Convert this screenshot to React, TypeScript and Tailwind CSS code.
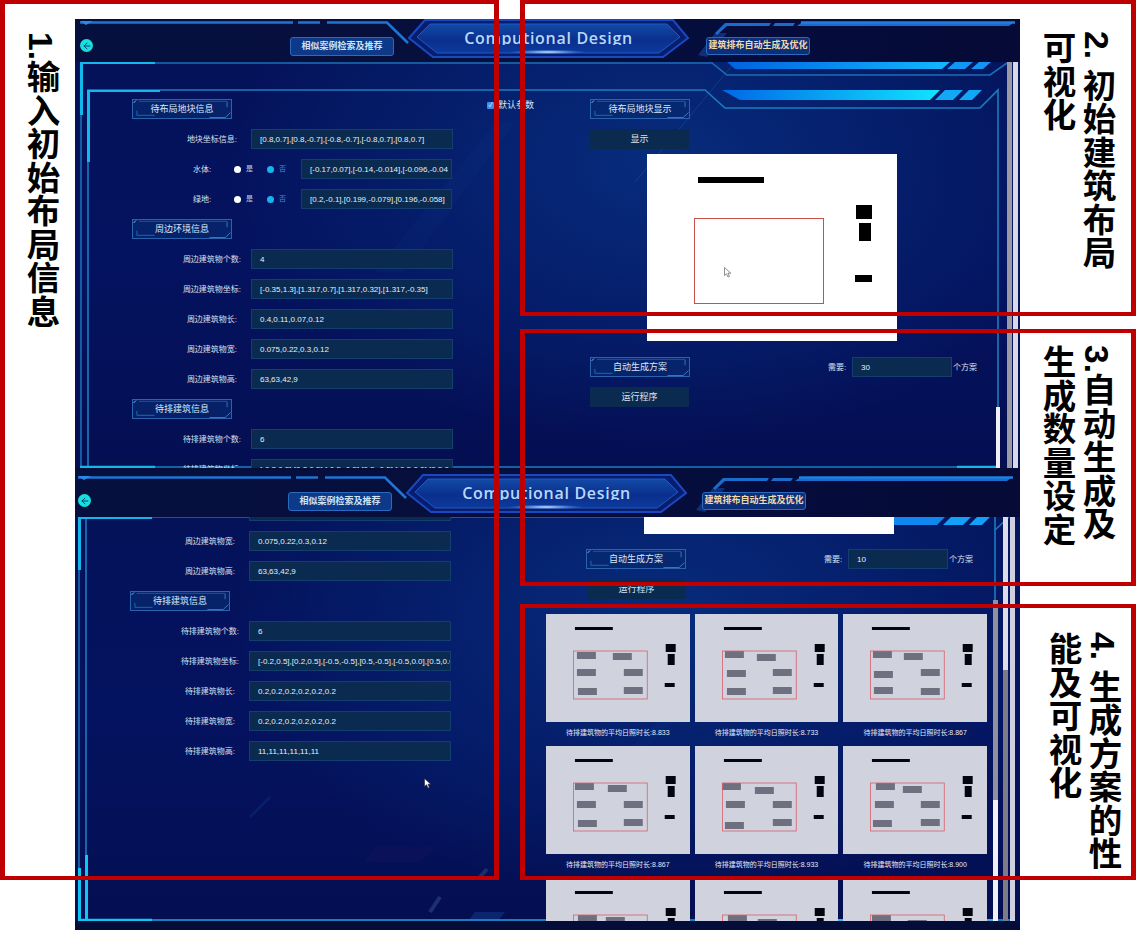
import React from "react";
import { ArrowLeft } from "lucide-react";

const titleFont = "[font-family:'Open_Sans','Noto_Sans',sans-serif]";

function Decor() {
  return (
    <svg className="absolute inset-0 pointer-events-none" width="8" height="8" viewBox="0 0 8 8">
      <path d="M0.5 3 L3 0.5" stroke="#7fb4e8" strokeWidth="1" fill="none" />
    </svg>
  );
}

function SectionTitle({ children }: { children: React.ReactNode }) {
  return (
    <div className="relative flex h-[20px] w-[100px] shrink-0 items-center justify-center border border-[#2c62ad] bg-[#07296f]/70 pt-[2px] text-[9px] text-[#dce8f8]">
      <Decor />
      <svg className="absolute inset-0 pointer-events-none" width="100%" height="100%" viewBox="0 0 100 20" preserveAspectRatio="none">
        <path d="M4 12 V17 H22" stroke="#2f79c8" strokeWidth="0.8" fill="none" />
        <path d="M96 2 V8" stroke="#3f8fd8" strokeWidth="0.8" fill="none" />
        <path d="M6 1.5 H96" stroke="#2f79c8" strokeWidth="0.6" fill="none" />
        <path d="M99.5 14 L94 19.5 H78" stroke="#5a8fd0" strokeWidth="0.8" fill="none" />
      </svg>
      <span className="relative">{children}</span>
    </div>
  );
}

function Field({ children, className }: { children: React.ReactNode; className: string }) {
  return (
    <div
      className={
        "h-[20px] shrink-0 overflow-hidden whitespace-nowrap border border-[#123f6f] bg-[#0a2a50] pl-[8px] pr-[4px] text-[8px] leading-[20px] text-[#e8f0f8] " +
        className
      }
    >
      {children}
    </div>
  );
}

function Row({ label, value }: { label: string; value: string }) {
  return (
    <div className="flex h-[20px] shrink-0 items-center pl-[107px]">
      <div className="w-[60px] pt-[2px] text-center text-[8px] whitespace-nowrap text-[#d6e0ee]">{label}</div>
      <Field className="ml-[9px] w-[202px]">{value}</Field>
    </div>
  );
}

function RadioRow({ label, value }: { label: string; value: string }) {
  return (
    <div className="flex h-[20px] shrink-0 items-center pl-[118px]">
      <span className="w-[21px] pt-[2px] text-[8px] text-[#d6e0ee]">{label}</span>
      <span className="ml-[20px] h-[7px] w-[7px] rounded-full bg-white" />
      <span className="ml-[5px] w-[7px] text-[7px] text-[#c8d4e8]">是</span>
      <span className="ml-[14px] h-[7px] w-[7px] rounded-full bg-[#17b4f0]" />
      <span className="ml-[5px] w-[7px] text-[7px] text-[#3f8de0]">否</span>
      <Field className="ml-[15px] w-[151px]">{value}</Field>
    </div>
  );
}

function TopFrame() {
  return (
    <svg className="absolute left-0 top-0 pointer-events-none" width="945" height="406" viewBox="0 0 945 406">
      <defs>
        <linearGradient id="barA" x1="0" x2="1" y1="0" y2="0">
          <stop offset="0" stopColor="#0062e0" />
          <stop offset="1" stopColor="#12b8ff" />
        </linearGradient>
        <linearGradient id="barB" x1="0" x2="1" y1="0" y2="0">
          <stop offset="0" stopColor="#0068e8" />
          <stop offset="1" stopColor="#10e4ff" />
        </linearGradient>
      </defs>
      <path d="M300 210 L420 60 L440 60 L330 210 Z" fill="#1a4aa0" opacity="0.08" />
      <path d="M660 0 L560 120" stroke="#2a62b0" strokeWidth="1" opacity="0.35" />
      <path d="M6 406 V1 H637 L652 13 H915 L932 1" stroke="#1b6fb4" strokeWidth="1.6" fill="none" />
      <path d="M13 406 V28 H630 L650 46 H905 L923 28 V406" stroke="#1b7cc0" strokeWidth="1.6" fill="none" />
      <path d="M5 405 H925" stroke="#1b7cc0" strokeWidth="1.6" />
      <path d="M6.5 0 V53" stroke="#12b8ea" strokeWidth="3" />
      <path d="M5 1 H80" stroke="#12b8ea" strokeWidth="2" />
      <path d="M13.5 28 V100" stroke="#12b8ea" strokeWidth="3" />
      <path d="M12 29 H85" stroke="#12b8ea" strokeWidth="2" />
      <path d="M5 405 H80 M882 405 H925" stroke="#16b4ea" strokeWidth="2.4" />
      <polygon points="652,0 875,0 867,7 660,7" fill="url(#barA)" />
      <polygon points="880,0 898,0 890,7 872,7" fill="#1296f4" />
      <polygon points="904,0 916,0 908,7 896,7" fill="#1296f4" />
      <polygon points="647,28 865,28 855,38 665,38" fill="url(#barB)" />
      <polygon points="870,28 888,28 878,38 860,38" fill="#12a8f8" />
      <polygon points="894,28 907,28 897,38 884,38" fill="#12a8f8" />
    </svg>
  );
}

function BottomFrame() {
  return (
    <svg className="absolute left-0 top-0 pointer-events-none" width="945" height="404" viewBox="0 0 945 404">
      <path d="M480 300 L600 190 L612 190 L500 300 Z" fill="#1a4aa0" opacity="0.08" />
      <path d="M300 330 H360 L345 345 H290 Z" fill="#3a1a60" opacity="0.14" />
      <path d="M195 280 L175 300" stroke="#1a4aa8" strokeWidth="3" opacity="0.22" />
      <path d="M355 395 L365 380" stroke="#5a7ab0" strokeWidth="4" opacity="0.3" />
      <path d="M405 360 L412 352" stroke="#5a7ab0" strokeWidth="4" opacity="0.28" />
      <path d="M400 395 H430 L424 403 H394 Z" fill="#1a4ea8" opacity="0.35" />
      <path d="M4 404 V0 H620" stroke="#1b6fb4" strokeWidth="1.6" fill="none" />
      <path d="M11 404 V0" stroke="#1b7cc0" strokeWidth="1.6" fill="none" />
      <path d="M920 0 V404" stroke="#1b7cc0" strokeWidth="1.6" fill="none" />
      <path d="M4 403 H940" stroke="#1b7cc0" strokeWidth="1.8" />
      <path d="M4.5 0 V53" stroke="#12b8ea" strokeWidth="3" />
      <path d="M3 1 H77" stroke="#12b8ea" strokeWidth="2" />
      <path d="M4.5 351 V404" stroke="#12c4f2" strokeWidth="3" />
      <path d="M11.5 338 V404" stroke="#12c4f2" strokeWidth="3" />
      <path d="M3 403 H77" stroke="#12c4f2" strokeWidth="2.4" />
      <path d="M700 403 H922" stroke="#4fb8f0" strokeWidth="2" opacity="0.8" />
      <polygon points="818,0 870,0 862,8 818,8" fill="#0f86f0" />
      <polygon points="876,0 896,0 888,8 868,8" fill="#12a0f8" />
      <polygon points="902,0 915,0 907,8 894,8" fill="#12a0f8" />
      <path d="M920 13 L934 0" stroke="#1b7cc0" strokeWidth="1.4" />
    </svg>
  );
}

function Header({ bottom }: { bottom?: boolean }) {
  return (
    <div className={"relative shrink-0 bg-[linear-gradient(90deg,#05103f,#070f3c_40%,#050d3d_70%,#050a36)] " + (bottom ? "h-[47px] pt-[4px]" : "h-[43px]")}>
      <div className={"relative h-[43px] w-[945px] " + (bottom ? "-ml-[2px]" : "")}>
        <svg className="absolute left-0 top-0" width="945" height="43" viewBox="0 0 945 43">
          <defs>
            <linearGradient id={bottom ? "plateB" : "plateA"} x1="0" x2="0" y1="0" y2="1">
              <stop offset="0" stopColor="#134aa6" />
              <stop offset="0.55" stopColor="#0a2f8e" />
              <stop offset="1" stopColor="#0d3a9c" />
            </linearGradient>
            <radialGradient id={bottom ? "glowB" : "glowA"}>
              <stop offset="0" stopColor="#dff2ff" />
              <stop offset="1" stopColor="#4aa0ff" stopOpacity="0" />
            </radialGradient>
          </defs>
          <path d="M5 3.5 H218 M223 3.5 H245 M252 3.5 H312 L333 24" stroke="#1f74d4" strokeWidth="2.6" fill="none" />
          <polygon points="5,2 18,2 11,6" fill="#2a8ae8" />
          <path d="M623 36 L640 14 L652 14 L632 38 Z" fill="#1a4aa8" opacity="0.55" />
          <path d="M640 14 L650 4 H696 L694 7 H652 L642 16 M700 4 H720 L718 7 H698 M726 4 H938 L934 7 H722" stroke="none" fill="#1b6bcc" />
          <path d="M726 3.5 H940" stroke="#1f7ee0" strokeWidth="2.6" />
          <polygon points="334,19 350,1 598,1 613,19 588,38 358,38" fill="#081d6e" stroke="#1a48c0" strokeWidth="2" />
          <polygon points="342,18 355,5 592,5 605,18 584,34 362,34" fill={"url(#" + (bottom ? "plateB" : "plateA") + ")"} stroke="#1d5ac4" strokeWidth="1" />
          <ellipse cx="473" cy="33" rx="38" ry="2.4" fill={"url(#" + (bottom ? "glowB" : "glowA") + ")"} />
        </svg>
        <div className="relative flex items-start pl-[5px]">
          <div className="mt-[20px] flex h-[13px] w-[13px] shrink-0 items-center justify-center rounded-full bg-[#16e0de] text-[#0a3a78]">
            <ArrowLeft size={10} strokeWidth={2.4} />
          </div>
          <div className="ml-[197px] mt-[18px] flex h-[19px] w-[104px] shrink-0 items-center justify-center rounded-[3px] border border-[#2a6bc0] bg-[#0c3a88] text-[9px] font-bold text-[#cfe2f6]">
            相似案例检索及推荐
          </div>
          <div className={"ml-[70px] mt-[8px] h-[18px] w-[169px] shrink-0 overflow-hidden whitespace-nowrap text-center text-[16px] font-semibold leading-[22px] tracking-[0.7px] text-[#b8d8fb] " + titleFont}>
            Computional Design
          </div>
          <div className={"mt-[18px] flex h-[18px] w-[104px] shrink-0 items-center justify-center rounded-[3px] border border-[#2a6bc0] bg-[#0c2f78] text-[9px] font-bold whitespace-nowrap text-[#f2d9a8] " + (bottom ? "ml-[71px]" : "ml-[73px]")}>
            建筑排布自动生成及优化
          </div>
        </div>
      </div>
    </div>
  );
}

type B = [number, number];

function Card({ blocks, caption }: { blocks: B[]; caption: string }) {
  return (
    <div className="flex flex-col items-center">
      <svg className="block h-[108px] w-full bg-[#d0d2de]" viewBox="0 0 144 108" preserveAspectRatio="none">
        <rect x="29" y="13" width="38" height="3" fill="#05050f" />
        <rect x="120" y="30" width="10" height="8" fill="#05050f" />
        <rect x="122" y="40" width="7" height="11" fill="#05050f" />
        <rect x="119" y="69" width="10" height="4" fill="#05050f" />
        {blocks.map(([x, y], i) => (
          <rect key={i} x={x} y={y} width="19" height="7" fill="#6e7080" />
        ))}
        <rect x="27.5" y="37" width="74" height="48" fill="none" stroke="#d8606c" strokeWidth="0.8" />
      </svg>
      <div className="h-[24px] whitespace-nowrap text-[7px] leading-[22px] text-[#e4e8f2]">{caption}</div>
    </div>
  );
}

const cards: { blocks: B[]; caption: string }[] = [
  { blocks: [[31, 38], [67, 39], [31, 55], [78, 55], [32, 74], [78, 73]], caption: "待排建筑物的平均日照时长:8.833" },
  { blocks: [[30, 37], [62, 40], [32, 56], [78, 55], [32, 74], [78, 73]], caption: "待排建筑物的平均日照时长:8.733" },
  { blocks: [[30, 37], [61, 39], [31, 57], [78, 55], [31, 73], [78, 74]], caption: "待排建筑物的平均日照时长:8.867" },
  { blocks: [[29, 37], [62, 39], [31, 55], [78, 55], [32, 74], [78, 73]], caption: "待排建筑物的平均日照时长:8.867" },
  { blocks: [[27, 37], [60, 41], [31, 55], [78, 55], [30, 76], [78, 73]], caption: "待排建筑物的平均日照时长:8.933" },
  { blocks: [[33, 37], [60, 40], [32, 55], [78, 55], [30, 74], [78, 73]], caption: "待排建筑物的平均日照时长:8.900" },
  { blocks: [[32, 37], [60, 39], [31, 55], [78, 55], [32, 74], [78, 73]], caption: "待排建筑物的平均日照时长:8.800" },
  { blocks: [[33, 37], [63, 41], [31, 55], [78, 55], [32, 74], [78, 73]], caption: "待排建筑物的平均日照时长:8.800" },
  { blocks: [[29, 37], [65, 42], [31, 55], [78, 55], [32, 74], [78, 73]], caption: "待排建筑物的平均日照时长:8.800" },
];

function Cursor({ color, stroke, className }: { color: string; stroke: string; className: string }) {
  return (
    <svg className={"absolute " + className} width="8" height="11" viewBox="0 0 8 11">
      <path d="M0.5 0.5 V8.5 L2.5 6.7 L4 10 L5.4 9.4 L4 6.2 H6.8 Z" fill={color} stroke={stroke} strokeWidth="0.6" />
    </svg>
  );
}

function Plan() {
  return (
    <div className="relative ml-[57px] mt-[5px] h-[187px] w-[250px] shrink-0 bg-white">
      <svg className="block" width="250" height="187" viewBox="0 0 250 187">
        <rect x="51" y="23" width="66" height="6" fill="#000" />
        <rect x="47.5" y="64.5" width="129" height="85" fill="none" stroke="#c8504a" strokeWidth="1" />
        <rect x="209" y="51" width="16" height="14" fill="#000" />
        <rect x="212" y="69" width="12" height="18" fill="#000" />
        <rect x="208" y="121" width="17" height="7" fill="#000" />
      </svg>
      <Cursor color="#ffffff" stroke="#444" className="left-[77px] top-[113px]" />
    </div>
  );
}

function GenerateRow({ value }: { value: string }) {
  return (
    <div className="flex h-[20px] shrink-0 items-center">
      <SectionTitle>自动生成方案</SectionTitle>
      <span className="ml-[138px] w-[24px] pt-[2px] text-[8px] whitespace-nowrap text-[#dce4f0]">需要:</span>
      <Field className="w-[100px]">{value}</Field>
      <span className="ml-[1px] pt-[2px] text-[8px] whitespace-nowrap text-[#dce4f0]">个方案</span>
    </div>
  );
}

function RunButton({ label }: { label: string }) {
  return (
    <div className="flex h-[20px] w-[99px] shrink-0 items-center justify-center bg-[#0a2a50] pt-[2px] text-[9px] text-[#dce4f0]">{label}</div>
  );
}

const bgMain =
  "bg-[radial-gradient(ellipse_430px_280px_at_62%_25%,#072c7c_0%,#051f6c_50%,transparent_100%),linear-gradient(180deg,#04125a,#041360_50%,#040f52)]";

function TopScreen() {
  return (
    <div className="flex h-[451px] w-[945px] shrink-0 flex-col">
      <Header />
      <div className={"relative h-[406px] shrink-0 overflow-hidden " + bgMain}>
        <TopFrame />
        <div className="relative flex h-full">
          <div className="flex w-[515px] shrink-0 flex-col gap-[10px] pt-[37px]">
            <div className="flex items-start justify-between pl-[57px] pr-[56px]">
              <SectionTitle>待布局地块信息</SectionTitle>
              <div className="flex items-center gap-[4px] text-[9px] leading-[12px] text-[#dce4f0]">
                <span className="flex h-[7px] w-[7px] items-center justify-center rounded-[1px] bg-[#3b8df0] text-[6px] leading-none text-white">✓</span>
                默认参数
              </div>
            </div>
            <Row label="地块坐标信息:" value="[0.8,0.7],[0.8,-0.7],[-0.8,-0.7],[-0.8,0.7],[0.8,0.7]" />
            <RadioRow label="水体:" value="[-0.17,0.07],[-0.14,-0.014],[-0.096,-0.04" />
            <RadioRow label="绿地:" value="[0.2,-0.1],[0.199,-0.079],[0.196,-0.058]" />
            <div className="pl-[57px]"><SectionTitle>周边环境信息</SectionTitle></div>
            <Row label="周边建筑物个数:" value="4" />
            <Row label="周边建筑物坐标:" value="[-0.35,1.3],[1.317,0.7],[1.317,0.32],[1.317,-0.35]" />
            <Row label="周边建筑物长:" value="0.4,0.11,0.07,0.12" />
            <Row label="周边建筑物宽:" value="0.075,0.22,0.3,0.12" />
            <Row label="周边建筑物高:" value="63,63,42,9" />
            <div className="pl-[57px]"><SectionTitle>待排建筑信息</SectionTitle></div>
            <Row label="待排建筑物个数:" value="6" />
            <Row label="待排建筑物坐标:" value="[-0.2,0.5],[0.2,0.5],[-0.5,-0.5],[0.5,-0.5],[-0.5,0.0],[0.5,0.0]" />
          </div>
          <div className="flex flex-col pt-[37px]">
            <SectionTitle>待布局地块显示</SectionTitle>
            <div className="mt-[10px]"><RunButton label="显示" /></div>
            <Plan />
            <div className="mt-[16px]"><GenerateRow value="30" /></div>
            <div className="mt-[10px]"><RunButton label="运行程序" /></div>
          </div>
        </div>
        <div className="absolute left-[921px] top-[345px] h-[61px] w-[4px] bg-[#f0f0f6]" />
        <div className="absolute left-[932px] top-0 h-full w-[5px] bg-[#9a9aa6]" />
        <div className="absolute left-[938px] top-0 h-full w-[5px] bg-[#d8d8e6]" />
      </div>
      <div className="h-[2px] shrink-0 bg-[#040c3a]" />
    </div>
  );
}

function BottomScreen() {
  return (
    <div className="flex h-[460px] w-[945px] shrink-0 flex-col">
      <Header bottom />
      <div className={"relative h-[404px] shrink-0 overflow-hidden " + bgMain}>
        <BottomFrame />
        <div className="relative flex h-full">
          <div className="-mt-[16px] -ml-[2px] flex w-[513px] shrink-0 flex-col gap-[10px]">
            <Row label="周边建筑物长:" value="0.4,0.11,0.07,0.12" />
            <Row label="周边建筑物宽:" value="0.075,0.22,0.3,0.12" />
            <Row label="周边建筑物高:" value="63,63,42,9" />
            <div className="pl-[57px]"><SectionTitle>待排建筑信息</SectionTitle></div>
            <Row label="待排建筑物个数:" value="6" />
            <Row label="待排建筑物坐标:" value="[-0.2,0.5],[0.2,0.5],[-0.5,-0.5],[0.5,-0.5],[-0.5,0.0],[0.5,0.0]" />
            <Row label="待排建筑物长:" value="0.2,0.2,0.2,0.2,0.2,0.2" />
            <Row label="待排建筑物宽:" value="0.2,0.2,0.2,0.2,0.2,0.2" />
            <Row label="待排建筑物高:" value="11,11,11,11,11,11" />
          </div>
          <div className="flex flex-col">
            <div className="ml-[58px] h-[17px] w-[250px] shrink-0 bg-white" />
            <div className="mt-[15px]"><GenerateRow value="10" /></div>
            <div className="ml-[1px] mt-[10px]"><RunButton label="运行程序" /></div>
            <div className="-ml-[40px] mt-[15px] grid w-[441px] shrink-0 grid-cols-3 gap-x-[5px]">
              {cards.map((c, i) => (
                <Card key={i} blocks={c.blocks} caption={c.caption} />
              ))}
            </div>
          </div>
        </div>
        <Cursor color="#ffffff" stroke="#223" className="left-[349px] top-[261px]" />
        <div className="absolute left-[918px] top-[83px] h-[200px] w-[5px] bg-[#8f929e]" />
        <div className="absolute left-[918px] top-[283px] h-[121px] w-[5px] bg-[#f0f0f6]" />
        <div className="absolute left-[928px] top-0 h-[153px] w-[5px] bg-[#dcdcea]" />
        <div className="absolute left-[928px] top-[153px] h-[251px] w-[5px] bg-[#7c7c88]" />
        <div className="absolute left-[935px] top-0 h-full w-[5px] bg-[#cfcfdf]" />
      </div>
      <div className="h-[9px] shrink-0 bg-[#040c3a]" />
    </div>
  );
}

const labelCls =
  "[writing-mode:vertical-rl] text-[33.5px] font-bold leading-[40px] text-black whitespace-nowrap";

export default function App() {
  return (
    <div className="relative flex h-[930px] w-[1140px] overflow-hidden bg-white [font-family:'Liberation_Sans','Noto_Sans_CJK_SC',sans-serif]">
      <aside className="w-[75px] shrink-0 pl-[20px] pt-[32px]">
        <div className={labelCls}>1.输入初始布局信息</div>
      </aside>
      <main className="flex w-[945px] shrink-0 flex-col pt-[19px]">
        <TopScreen />
        <BottomScreen />
      </main>
      <aside className="flex flex-1 flex-col">
        <div className="flex h-[345px] shrink-0 justify-end pr-[24px] pt-[31px]">
          <div className={labelCls}>2. 初始建筑布局<br />可视化</div>
        </div>
        <div className="flex h-[287px] shrink-0 justify-end pr-[24px]">
          <div className={labelCls}>3.自动生成及<br />生成数量设定</div>
        </div>
        <div className="flex flex-1 justify-end pr-[18px]">
          <div className={labelCls}>4. 生成方案的性<br />能及可视化</div>
        </div>
      </aside>
      <div className="pointer-events-none absolute left-0 top-0 h-[880px] w-[499px] border-x-[5px] border-y-[4px] border-[#c00000]" />
      <div className="pointer-events-none absolute left-[520px] top-0 h-[316px] w-[616px] border-x-[5px] border-y-[4px] border-[#c00000]" />
      <div className="pointer-events-none absolute left-[520px] top-[329px] h-[257px] w-[616px] border-x-[5px] border-y-[4px] border-[#c00000]" />
      <div className="pointer-events-none absolute left-[520px] top-[604px] h-[276px] w-[616px] border-x-[5px] border-y-[4px] border-[#c00000]" />
    </div>
  );
}
